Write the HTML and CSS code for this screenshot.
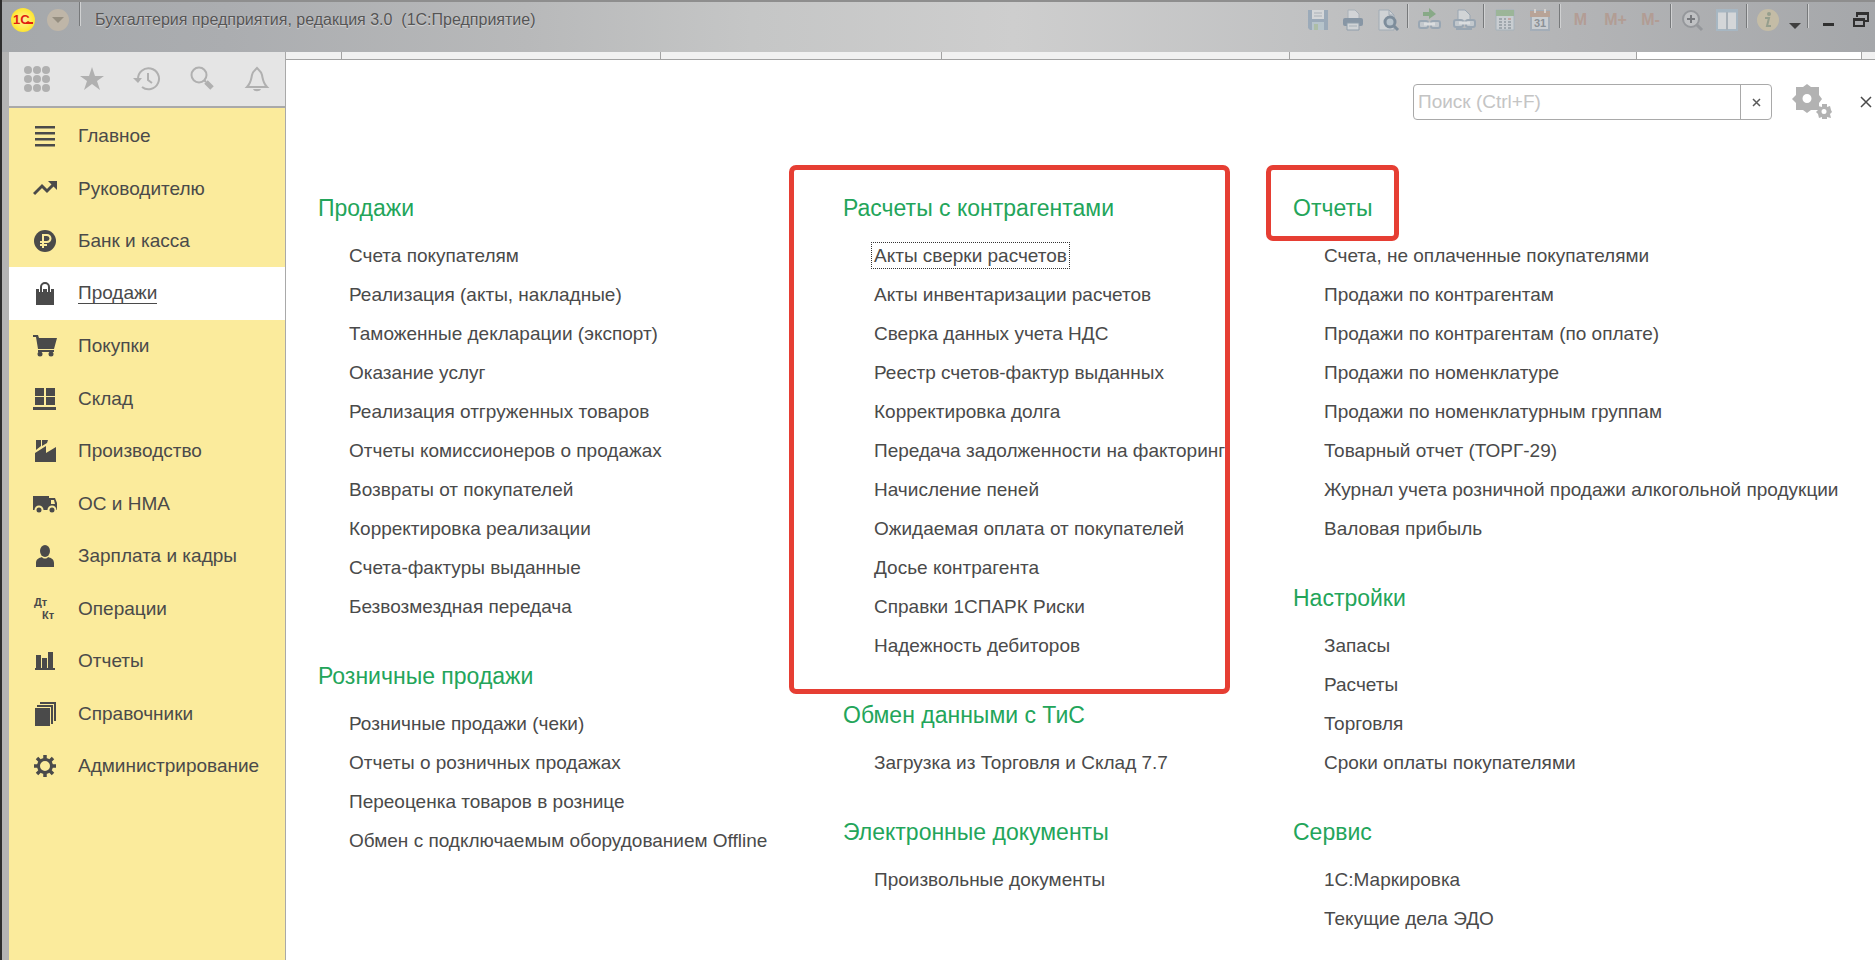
FILE: index.html
```
<!DOCTYPE html>
<html lang="ru">
<head>
<meta charset="utf-8">
<title>Бухгалтерия предприятия, редакция 3.0 (1С:Предприятие)</title>
<link rel="stylesheet" href="styles.css">
</head>
<body>
<div class="window">
  <header class="titlebar">
    <div class="title-left">
      <button class="logo" aria-label="Главное меню"><svg width="24" height="24" viewBox="0 0 24 24"><text x="2" y="16" class="logo-text">1C</text><path d="M15 15h7" stroke="#e02010" stroke-width="2"/></svg></button>
      <button class="menu-drop" aria-label="Меню"><svg width="12" height="6" viewBox="0 0 12 6"><path d="M0 0h12L6 6z" fill="#958e80"/></svg></button>
      <span class="sep"></span>
      <h1 class="app-title">Бухгалтерия предприятия, редакция 3.0&nbsp; (1С:Предприятие)</h1>
    </div>
    <div class="title-tools">
      <button class="tool" aria-label="Сохранить"><svg width="24" height="24" viewBox="0 0 24 24"><path d="M2 2h20v20H4l-2-2z" fill="#8fa3b6"/><path d="M6 2h12v9H6z" fill="#dcdfe1"/><path d="M8 5h8M8 8h8" stroke="#a3adb6"/><path d="M6 14h12v8H6z" fill="#b4c6cf"/><path d="M8 16h4v6H8z" fill="#a7bd9f"/></svg></button>
      <button class="tool" aria-label="Печать"><svg width="24" height="24" viewBox="0 0 24 24"><path d="M7 2h7l4 4v5H7z" fill="#d9dcdf" stroke="#a2acb6"/><rect x="2" y="10" width="20" height="8" rx="2" fill="#75899c"/><path d="M6 15h12v7H6z" fill="#d5dade" stroke="#8294a5"/><path d="M8 18h8" stroke="#a2acb6"/></svg></button>
      <button class="tool" aria-label="Предварительный просмотр"><svg width="24" height="24" viewBox="0 0 24 24"><path d="M3 2h10l5 5v15H3z" fill="#d6dadd" stroke="#98a6b3"/><path d="M13 2v5h5" fill="none" stroke="#98a6b3"/><circle cx="14" cy="14" r="5" fill="#b5c4cf" stroke="#687d90" stroke-width="3"/><path d="M18 18l4 4" stroke="#687d90" stroke-width="3"/></svg></button>
      <span class="sep"></span>
      <button class="tool" aria-label="Получить ссылку"><svg width="24" height="24" viewBox="0 0 24 24"><path d="M6 4h6V0l7 6-7 5V8H6z" fill="#78a476"/><rect x="2" y="13" width="9" height="7" rx="2" fill="#c6cdd3" stroke="#8fa0b0" stroke-width="2"/><rect x="14" y="13" width="9" height="7" rx="2" fill="#c6cdd3" stroke="#8fa0b0" stroke-width="2"/><path d="M7 16h11" stroke="#e6e9eb" stroke-width="3"/></svg></button>
      <button class="tool" aria-label="Перейти по ссылке"><svg width="24" height="24" viewBox="0 0 24 24"><path d="M6 2h7l5 5v6H6z" fill="#dadde0" stroke="#8fa0b0"/><rect x="2" y="12" width="9" height="7" rx="2" fill="#c6cdd3" stroke="#8fa0b0" stroke-width="2"/><rect x="14" y="12" width="9" height="7" rx="2" fill="#c6cdd3" stroke="#8fa0b0" stroke-width="2"/><path d="M7 15h11" stroke="#e6e9eb" stroke-width="3"/><path d="M4 21h16" stroke="#8fa0b0" stroke-width="2"/></svg></button>
      <span class="sep"></span>
      <button class="tool" aria-label="Калькулятор"><svg width="24" height="24" viewBox="0 0 24 24"><path d="M3 2h18v20H3z" fill="#cfd5d9" stroke="#a1b0bc"/><path d="M3 2h18v6H3z" fill="#93b58e"/><path d="M6 11h3m2 0h2m2 0h3M6 14h3m2 0h2m2 0h3M6 17h3m2 0h2m2 0h3M6 20h3m2 0h2m2 0h3" stroke="#98a2a9" stroke-width="2"/><path d="M15 11h3" stroke="#cb9d98" stroke-width="2"/></svg></button>
      <button class="tool" aria-label="Календарь"><svg width="24" height="24" viewBox="0 0 24 24"><path d="M3 3h18v19H3z" fill="#d2d6da" stroke="#9eabb8" stroke-width="2"/><path d="M2 3h20v6H2z" fill="#b99d8d"/><path d="M7 1v4M17 1v4" stroke="#dfd9d5" stroke-width="2"/><text x="12" y="19" text-anchor="middle" class="cal-num">31</text></svg></button>
      <span class="sep"></span>
      <button class="tool mem">M</button>
      <button class="tool mem">M+</button>
      <button class="tool mem">M-</button>
      <span class="sep"></span>
      <button class="tool" aria-label="Увеличить"><svg width="24" height="24" viewBox="0 0 24 24"><circle cx="11" cy="11" r="8" fill="#c6c8ca" stroke="#8d9094" stroke-width="2"/><path d="M7 11h8M11 7v8" stroke="#66696d" stroke-width="2"/><path d="M17 17l5 5" stroke="#8d9094" stroke-width="3"/></svg></button>
      <button class="tool" aria-label="Панели"><svg width="24" height="24" viewBox="0 0 24 24"><path d="M2 2h20v20H2z" fill="#e2e4e6" stroke="#a6bac9" stroke-width="2"/><path d="M1 3h22" stroke="#a6bac9" stroke-width="3"/><path d="M12 4v18" stroke="#a6b0b8" stroke-width="2"/></svg></button>
      <span class="sep"></span>
      <button class="tool" aria-label="Справка"><svg width="24" height="24" viewBox="0 0 24 24"><circle cx="12" cy="12" r="11" fill="#cdc2a4"/><circle cx="13" cy="6" r="2" fill="#8f9a82"/><path d="M9 10h4l-2 8h4" fill="none" stroke="#8f9a82" stroke-width="2"/></svg></button>
      <button class="tool tool-narrow strong" aria-label="Ещё"><svg class="low" width="12" height="6" viewBox="0 0 12 6"><path d="M0 0h12L6 6z" fill="#3f3f3f"/></svg></button>
      <span class="sep"></span>
      <button class="tool strong" aria-label="Свернуть"><svg width="12" height="12" viewBox="0 0 12 12"><path d="M0 9h11v3H0z" fill="#303030"/></svg></button>
      <button class="tool tool-last strong" aria-label="Восстановить"><svg width="18" height="18" viewBox="0 0 18 18"><path d="M5 6V3h11v7h-3" fill="none" stroke="#303030" stroke-width="2"/><path d="M4 1h13v3H4zM1 7h12v3H1z" fill="#303030"/><path d="M2 8h10v7H2z" fill="none" stroke="#303030" stroke-width="2"/></svg></button>
    </div>
  </header>

  <div class="body">
    <aside class="sidebar">
      <div class="quick">
        <button aria-label="Меню функций"><svg width="26" height="26" viewBox="0 0 26 26" fill="#b0b0b0"><circle cx="4" cy="4" r="4"/><circle cx="13" cy="4" r="4"/><circle cx="22" cy="4" r="4"/><circle cx="4" cy="13" r="4"/><circle cx="13" cy="13" r="4"/><circle cx="22" cy="13" r="4"/><circle cx="4" cy="22" r="4"/><circle cx="13" cy="22" r="4"/><circle cx="22" cy="22" r="4"/></svg></button>
        <button aria-label="Избранное"><svg width="26" height="26" viewBox="0 0 26 26"><path d="M13 1l3 9h9l-7 5 3 9-8-6-8 6 3-9-7-5h9z" fill="#b0b0b0"/></svg></button>
        <button aria-label="История"><svg width="28" height="26" viewBox="0 0 28 26" fill="none" stroke="#b0b0b0" stroke-width="2"><path d="M5 14V13a10.500 10.500 0 1 1 4 8"/><path d="M15 7v7l4 3"/><path d="M0 12h9l-4 5z" fill="#b0b0b0" stroke="none"/></svg></button>
        <button aria-label="Поиск"><svg width="26" height="26" viewBox="0 0 26 26" fill="none" stroke="#b0b0b0"><circle cx="10" cy="9" r="7.500" stroke-width="2"/><path d="M15 14l2 2" stroke-width="2"/><path d="M17 16l6 6" stroke-width="5"/></svg></button>
        <button aria-label="Уведомления"><svg width="26" height="28" viewBox="0 0 26 28"><path d="M3 22c4-4 4-7 5-12 1-4 3-5 5-7 2 2 4 3 5 7 1 5 1 8 5 12z" fill="none" stroke="#b0b0b0" stroke-width="2"/><path d="M9 24h8c-1 3-7 3-8 0z" fill="#b0b0b0"/></svg></button>
      </div>
      <nav aria-label="Разделы">
        <ul class="nav">
          <li><a href="#"><svg class="ico" viewBox="0 0 24 24"><path d="M2 2h20v2.500H2zM2 8h20v2.500H2zM2 14h20v2.500H2zM2 20h20v2.500H2z"/></svg>Главное</a></li>
          <li><a href="#"><svg class="ico" viewBox="0 0 24 24"><path d="M1 17l8-8 5 5 7-7" fill="none" stroke="#4a4a4a" stroke-width="3"/><path d="M15 4h9v9z"/></svg>Руководителю</a></li>
          <li><a href="#"><svg class="ico" viewBox="0 0 24 24"><circle cx="12" cy="12" r="11"/><path d="M10 19V6h4a3 3 0 0 1 0 7H7M7 16h7" fill="none" stroke="#fbeb9c" stroke-width="2"/></svg>Банк и касса</a></li>
          <li class="active"><a href="#" aria-current="page"><svg class="ico" viewBox="0 0 24 24"><path d="M3 7h18v16H3z"/><path d="M8 10V5a4 4 0 0 1 8 0v5" fill="none" stroke="#fff" stroke-width="4"/><path d="M8 10V5a4 4 0 0 1 8 0v5" fill="none" stroke="#4a4a4a" stroke-width="2"/></svg><span>Продажи</span></a></li>
          <li><a href="#"><svg class="ico" viewBox="0 0 24 24"><path d="M0 1h5l1 3h18l-3 11H5L3 3H0zM5 16h16v2H5z"/><circle cx="7" cy="20" r="2.500"/><circle cx="18" cy="20" r="2.500"/></svg>Покупки</a></li>
          <li><a href="#"><svg class="ico" viewBox="0 0 24 24"><path d="M2 1h9v8H2zM13 1h9v8h-9zM2 10h9v8H2zM13 10h9v8h-9zM0 20h23v3H0z"/></svg>Склад</a></li>
          <li><a href="#"><svg class="ico" viewBox="0 0 24 24"><path d="M2 23V14l11-7v7l10-6v15zM3 1h5v6l-5 4zM9 1h6l-1 3-5 3z"/></svg>Производство</a></li>
          <li><a href="#"><svg class="ico" viewBox="0 0 24 24"><path d="M0 4h16v14H0zM16 6h6l2 5v7h-8z"/><path d="M18 8h3l1 4h-4z" fill="#fbeb9c"/><circle cx="6" cy="18" r="3.500" stroke="#fbeb9c" stroke-width="2"/><circle cx="19" cy="18" r="3.500" stroke="#fbeb9c" stroke-width="2"/></svg>ОС и НМА</a></li>
          <li><a href="#"><svg class="ico" viewBox="0 0 24 24"><ellipse cx="12" cy="7" rx="5" ry="6"/><path d="M3 23v-4c0-4 3-5 6-6 1 2 5 2 6 0 3 1 6 2 6 6v4z"/></svg>Зарплата и кадры</a></li>
          <li><a href="#"><svg class="ico" viewBox="0 0 24 24"><text x="1" y="9" class="dk">Дт</text><text x="9" y="22" class="dk">Кт</text></svg>Операции</a></li>
          <li><a href="#"><svg class="ico" viewBox="0 0 24 24"><path d="M3 6h5v14H3zM9 9h5v11H9zM15 3h5v17h-5zM2 19h20v2H2z"/></svg>Отчеты</a></li>
          <li><a href="#"><svg class="ico" viewBox="0 0 24 24"><path d="M2 6h15v18H2z"/><path d="M4 4h15v18M7 1h15v18" fill="none" stroke="#4a4a4a" stroke-width="2"/></svg>Справочники</a></li>
          <li><a href="#"><svg class="ico" viewBox="0 0 24 24"><g fill="none" stroke="#4a4a4a"><circle cx="12" cy="12" r="6.500" stroke-width="3"/><path d="M12 1v4M12 19v4M1 12h4M19 12h4M4 4l3 3M17 17l3 3M20 4l-3 3M7 17l-3 3" stroke-width="3.500"/></g></svg>Администрирование</a></li>
        </ul>
      </nav>
    </aside>

    <main class="main">
      <div class="tabs"><span class="t1"></span><span class="t2"></span><span class="t3"></span><span class="t4"></span><span class="t5"></span><span class="t6 current"></span><span class="t7"></span></div>
      <div class="searchbar">
        <div class="search">
          <input type="text" placeholder="Поиск (Ctrl+F)" aria-label="Поиск">
          <button aria-label="Очистить"><svg width="9" height="9" viewBox="0 0 9 9"><path d="M1 1l7 7M8 1l-7 7" stroke="#5a5a5a" stroke-width="1.500"/></svg></button>
        </div>
        <button class="gear" aria-label="Настройка"><svg width="40" height="36" viewBox="0 0 40 36" fill="#b2b2b2"><path fill-rule="evenodd" d="M15 0l4 3h8v8l3 4-3 4v7h-8l-4 3-4-3H4v-7l-4-4 4-4V3h7zM15 10a4.500 4.500 0 1 0 0 9 4.500 4.500 0 0 0 0-9z"/><path fill-rule="evenodd" d="M30 20h5v3l3-1 1 4 1 2-2 2 1 4-4-1v2h-5v-2l-3 1-1-4-2-2 2-2v-4l4 1zM32 25a2.500 2.500 0 1 0 0 5 2.500 2.500 0 0 0 0-5z"/></svg></button>
        <button class="close" aria-label="Закрыть"><svg width="12" height="12" viewBox="0 0 12 12"><path d="M1 1l10 10M11 1L1 11" stroke="#4a4a4a" stroke-width="1.500"/></svg></button>
      </div>

      <div class="columns">
        <div class="column">
          <section>
            <h2>Продажи</h2>
            <ul>
              <li><a href="#">Счета покупателям</a></li>
              <li><a href="#">Реализация (акты, накладные)</a></li>
              <li><a href="#">Таможенные декларации (экспорт)</a></li>
              <li><a href="#">Оказание услуг</a></li>
              <li><a href="#">Реализация отгруженных товаров</a></li>
              <li><a href="#">Отчеты комиссионеров о продажах</a></li>
              <li><a href="#">Возвраты от покупателей</a></li>
              <li><a href="#">Корректировка реализации</a></li>
              <li><a href="#">Счета-фактуры выданные</a></li>
              <li><a href="#">Безвозмездная передача</a></li>
            </ul>
          </section>
          <section>
            <h2>Розничные продажи</h2>
            <ul>
              <li><a href="#">Розничные продажи (чеки)</a></li>
              <li><a href="#">Отчеты о розничных продажах</a></li>
              <li><a href="#">Переоценка товаров в рознице</a></li>
              <li><a href="#">Обмен с подключаемым оборудованием Offline</a></li>
            </ul>
          </section>
        </div>
        <div class="column">
          <section class="marked">
            <h2>Расчеты с контрагентами</h2>
            <ul>
              <li><a href="#" class="focused">Акты сверки расчетов</a></li>
              <li><a href="#">Акты инвентаризации расчетов</a></li>
              <li><a href="#">Сверка данных учета НДС</a></li>
              <li><a href="#">Реестр счетов-фактур выданных</a></li>
              <li><a href="#">Корректировка долга</a></li>
              <li class="clipped"><a href="#">Передача задолженности на факторинг</a></li>
              <li><a href="#">Начисление пеней</a></li>
              <li><a href="#">Ожидаемая оплата от покупателей</a></li>
              <li><a href="#">Досье контрагента</a></li>
              <li><a href="#">Справки 1СПАРК Риски</a></li>
              <li><a href="#">Надежность дебиторов</a></li>
            </ul>
          </section>
          <section>
            <h2>Обмен данными с ТиС</h2>
            <ul><li><a href="#">Загрузка из Торговля и Склад 7.7</a></li></ul>
          </section>
          <section>
            <h2>Электронные документы</h2>
            <ul><li><a href="#">Произвольные документы</a></li></ul>
          </section>
        </div>
        <div class="column">
          <section>
            <h2><span class="marked-title">Отчеты</span></h2>
            <ul>
              <li><a href="#">Счета, не оплаченные покупателями</a></li>
              <li><a href="#">Продажи по контрагентам</a></li>
              <li><a href="#">Продажи по контрагентам (по оплате)</a></li>
              <li><a href="#">Продажи по номенклатуре</a></li>
              <li><a href="#">Продажи по номенклатурным группам</a></li>
              <li><a href="#">Товарный отчет (ТОРГ-29)</a></li>
              <li><a href="#">Журнал учета розничной продажи алкогольной продукции</a></li>
              <li><a href="#">Валовая прибыль</a></li>
            </ul>
          </section>
          <section>
            <h2>Настройки</h2>
            <ul>
              <li><a href="#">Запасы</a></li>
              <li><a href="#">Расчеты</a></li>
              <li><a href="#">Торговля</a></li>
              <li><a href="#">Сроки оплаты покупателями</a></li>
            </ul>
          </section>
          <section>
            <h2>Сервис</h2>
            <ul>
              <li><a href="#">1С:Маркировка</a></li>
              <li><a href="#">Текущие дела ЭДО</a></li>
            </ul>
          </section>
        </div>
      </div>
    </main>
  </div>
</div>
</body>
</html>
```
FILE: styles.css
```
* { box-sizing: border-box; }
body {
  margin: 0;
  font-family: "Liberation Sans", Arial, sans-serif;
  font-size: 19px;
  color: #4a4a4a;
  background: #fff;
  overflow: hidden;
}
ul { list-style: none; margin: 0; padding: 0; }
h1, h2 { margin: 0; font-weight: normal; }
a { color: inherit; text-decoration: none; }
button { border: 0; padding: 0; background: none; font: inherit; color: inherit; display: flex; align-items: center; justify-content: center; }
svg { flex: none; display: block; }

.window { min-height: 100vh; display: flex; flex-direction: column; border-left: 2px solid #2d2d2d; }
.titlebar {
  height: 52px;
  display: flex;
  justify-content: space-between;
  align-items: flex-start;
  border-top: 2px solid #8e8e8e;
  background: linear-gradient(90deg, #a5a8ab 0%, #abadb0 12%, #b8b9ba 28%, #c5c6c6 40%, #cecece 54%, #c0c1c2 70%, #b3b4b6 84%, #a5a7aa 100%);
}
.title-left { display: flex; align-items: center; height: 36px; padding-left: 9px; }
.logo {
  width: 24px; height: 24px; border-radius: 50%;
  background: radial-gradient(#fff3a0, #ffe83c 60%, #f0d428);
}
.logo-text { font-size: 13px; font-weight: bold; fill: #e02010; }
.menu-drop { width: 22px; height: 22px; margin-left: 12px; border-radius: 50%; background: #bfb6a8; }
.title-left .sep { margin: 0 12px 0 8px; }
.sep { width: 6px; height: 24px; align-self: flex-start; margin-top: 2px; background: linear-gradient(90deg, transparent 2px, #77797b 2px, #77797b 3px, #d0d1d2 3px, #d0d1d2 4px, transparent 4px); }
.app-title { font-size: 16px; color: #555; text-shadow: 0 1px 1px #d6d6d6; white-space: nowrap; }
.title-tools { display: flex; align-items: center; height: 36px; }
.tool { width: 35px; height: 36px; opacity: 0.75; }
.strong { opacity: 1; }
.tool-narrow { width: 20px; }
.tool-last { width: 29px; }
.low { margin-top: 12px; }
.mem { font-size: 16px; font-weight: bold; color: #b3968a; }
.cal-num { font-size: 11px; font-weight: bold; fill: #7d858c; }

.body { flex: 1; display: flex; border-left: 7px solid #b4b4b4; }
.sidebar { width: 277px; flex: none; background: #fbeb9c; border-right: 1px solid #a9a9a9; }
.quick { height: 56px; display: flex; background: #e5e5e5; border-bottom: 2px solid #a9a9a9; }
.quick button { flex: 1; }
.nav { padding-top: 2px; }
.nav a { display: flex; align-items: center; gap: 21px; height: 52px; padding-left: 24px; white-space: nowrap; }
.nav li:nth-child(even) a { height: 53px; }
.ico { width: 24px; height: 24px; fill: #4a4a4a; }
.dk { font-size: 11px; font-weight: bold; }
.active { background: #fff; }
.active span { border-bottom: 1px solid #4a4a4a; line-height: 20px; }

.main { flex: 1; min-width: 0; }
.tabs { height: 8px; display: flex; background: #f1f1f1; border-bottom: 1px solid #a3a3a3; }
.tabs span { border-right: 1px solid #a3a3a3; }
.t1 { flex: 55; }
.t2 { flex: 320; }
.t3 { flex: 281; }
.t4 { flex: 348; }
.t5 { flex: 348; }
.t6 { flex: 225; }
.t7 { flex: 13; }
.tabs .t7 { border-right: 0; }
.tabs .current { background: #fff; }

.searchbar { display: flex; justify-content: flex-end; align-items: center; padding: 24px 3px 0 0; height: 60px; }
.search { display: flex; width: 359px; height: 36px; border: 1px solid #a9a9a9; border-radius: 4px; }
.search input { flex: 1; min-width: 0; border: 0; padding: 0 4px; background: none; font: inherit; }
.search input::placeholder { color: #c4c4c4; opacity: 1; }
.search button { width: 31px; border-left: 1px solid #a9a9a9; }
.gear { margin-left: 20px; }
.close { margin-left: 28px; }

.columns { display: grid; grid-template-columns: 458fr 383fr 582fr; column-gap: 67px; padding: 69px 0 0 32px; }
.column { min-width: 0; }
section { padding-bottom: 31px; position: relative; }
h2 { font-size: 23px; line-height: 39px; color: #23a55a; margin-bottom: 8px; white-space: nowrap; }
section ul { padding-left: 31px; }
section li { line-height: 39px; white-space: nowrap; }
.clipped { overflow: hidden; }
.focused { outline: 1px dotted #333; outline-offset: 2px; }
.marked::after, .marked-title::after {
  content: "";
  position: absolute;
  border: 5px solid #e63e33;
  border-radius: 7px;
  pointer-events: none;
}
.marked::after { left: -54px; right: -4px; top: -24px; bottom: 2px; }
.marked-title { position: relative; }
.marked-title::after { left: -27px; right: -26px; top: -30px; bottom: -20px; }
```
